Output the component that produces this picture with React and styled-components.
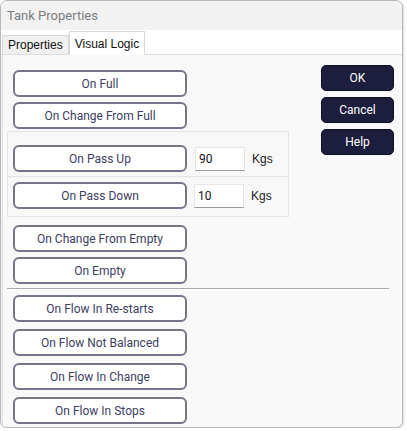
import React from "react";
import styled, { createGlobalStyle } from "styled-components";

const GlobalStyle = createGlobalStyle`
  html, body {
    margin: 0;
    padding: 0;
    background: #ffffff;
  }
  body {
    font-family: Roboto, "Noto Sans", sans-serif;
  }
`;

const Window = styled.div`
  width: 403px;
  height: 428px;
  box-sizing: border-box;
  border: 1px solid #b8b8b8;
  border-radius: 7px;
  background: #f2f2f2;
  overflow: hidden;
  display: flex;
  flex-direction: column;
  box-shadow: 1px 1px 2px rgba(0, 0, 0, 0.15);
`;

const TitleBar = styled.div`
  height: 29px;
  padding-left: 6px;
  display: flex;
  align-items: center;
  font-size: 13px;
  color: #7c7c7c;
  background: #f2f2f2;
`;

const TabStrip = styled.div`
  height: 24px;
  background: #ffffff;
  display: flex;
  align-items: flex-end;
  padding-left: 1px;
  border-bottom: 1px solid #dcdcdc;
`;

const Tab = styled.div`
  height: ${(p) => (p.$active ? "24px" : "19px")};
  padding: 0 5px;
  box-sizing: border-box;
  display: flex;
  align-items: center;
  font-family: "Liberation Sans", Arial, sans-serif;
  font-size: 12px;
  color: #111;
  background: ${(p) => (p.$active ? "#ffffff" : "#f0f0f0")};
  border: 1px solid #d8d8d8;
  border-bottom: none;
  margin-bottom: ${(p) => (p.$active ? "-1px" : "0")};
`;

const Body = styled.div`
  flex: 1;
  margin: 0 0 0 1px;
  background: #f9f9f9;
  border-left: 1px solid #e2e2e2;
  display: flex;
`;

const LeftCol = styled.div`
  width: 288px;
  padding: 15px 0 0 10px;
  display: flex;
  flex-direction: column;
`;

const Stack = styled.div`
  display: flex;
  flex-direction: column;
  gap: ${(p) => p.$gap || 5}px;
  margin-top: ${(p) => p.$mt || 0}px;
`;

const LogicButton = styled.button`
  width: 174px;
  height: 27px;
  box-sizing: border-box;
  background: #ffffff;
  border: 2px solid #76768a;
  border-radius: 6px;
  font-family: Roboto, "Noto Sans", sans-serif;
  font-size: 12px;
  color: #40405f;
  padding: 0;
  cursor: pointer;
`;

const Group = styled.div`
  margin: 2px 0 0 -6px;
  width: 282px;
  display: flex;
  flex-direction: column;
`;

const GroupRow = styled.div`
  height: ${(p) => p.$h}px;
  box-sizing: border-box;
  border: 1px solid #e4e4e4;
  border-top: ${(p) => (p.$first ? "1px solid #e4e4e4" : "none")};
  padding: ${(p) => p.$pt}px 0 0 5px;
  display: flex;
  align-items: flex-start;
  background: #f8f8f8;
`;

const Field = styled.input`
  width: 50px;
  height: 24px;
  box-sizing: border-box;
  margin: 2px 0 0 ${(p) => p.$ml || 8}px;
  border: 1px solid #e6e6e6;
  border-bottom: 1px solid #9a9a9a;
  background: #ffffff;
  font-family: Roboto, "Noto Sans", sans-serif;
  font-size: 12px;
  color: #111;
  padding: 0 3px;
  outline: none;
`;

const Unit = styled.span`
  margin: 7px 0 0 7px;
  font-family: "Liberation Sans", Arial, sans-serif;
  font-size: 12px;
  color: #222;
`;

const Separator = styled.div`
  margin: 4px 0 0 -6px;
  width: 382px;
  height: 1px;
  background: #a9a9a9;
  border-bottom: 1px solid #ffffff;
`;

const RightCol = styled.div`
  padding: 10px 0 0 20px;
  display: flex;
  flex-direction: column;
  gap: 6px;
`;

const DialogButton = styled.button`
  width: 73px;
  height: 26px;
  background: #1d1d3d;
  border: 1px solid #0e0e26;
  border-radius: 5px;
  color: #ffffff;
  font-family: Roboto, "Noto Sans", sans-serif;
  font-size: 12px;
  padding: 0;
  cursor: pointer;
`;

export default function App() {
  return (
    <>
      <GlobalStyle />
      <Window>
        <TitleBar>Tank Properties</TitleBar>
        <TabStrip>
          <Tab>Properties</Tab>
          <Tab $active>Visual Logic</Tab>
        </TabStrip>
        <Body>
          <LeftCol>
            <Stack $gap={5}>
              <LogicButton>On Full</LogicButton>
              <LogicButton>On Change From Full</LogicButton>
            </Stack>
            <Group>
              <GroupRow $first $h={46} $pt={13}>
                <LogicButton>On Pass Up</LogicButton>
                <Field defaultValue="90" />
                <Unit>Kgs</Unit>
              </GroupRow>
              <GroupRow $h={40} $pt={5}>
                <LogicButton>On Pass Down</LogicButton>
                <Field defaultValue="10" $ml={7} />
                <Unit>Kgs</Unit>
              </GroupRow>
            </Group>
            <Stack $gap={5} $mt={8}>
              <LogicButton>On Change From Empty</LogicButton>
              <LogicButton>On Empty</LogicButton>
            </Stack>
            <Separator />
            <Stack $gap={7} $mt={5}>
              <LogicButton>On Flow In Re-starts</LogicButton>
              <LogicButton>On Flow Not Balanced</LogicButton>
              <LogicButton>On Flow In Change</LogicButton>
              <LogicButton>On Flow In Stops</LogicButton>
            </Stack>
          </LeftCol>
          <RightCol>
            <DialogButton>OK</DialogButton>
            <DialogButton>Cancel</DialogButton>
            <DialogButton>Help</DialogButton>
          </RightCol>
        </Body>
      </Window>
    </>
  );
}
